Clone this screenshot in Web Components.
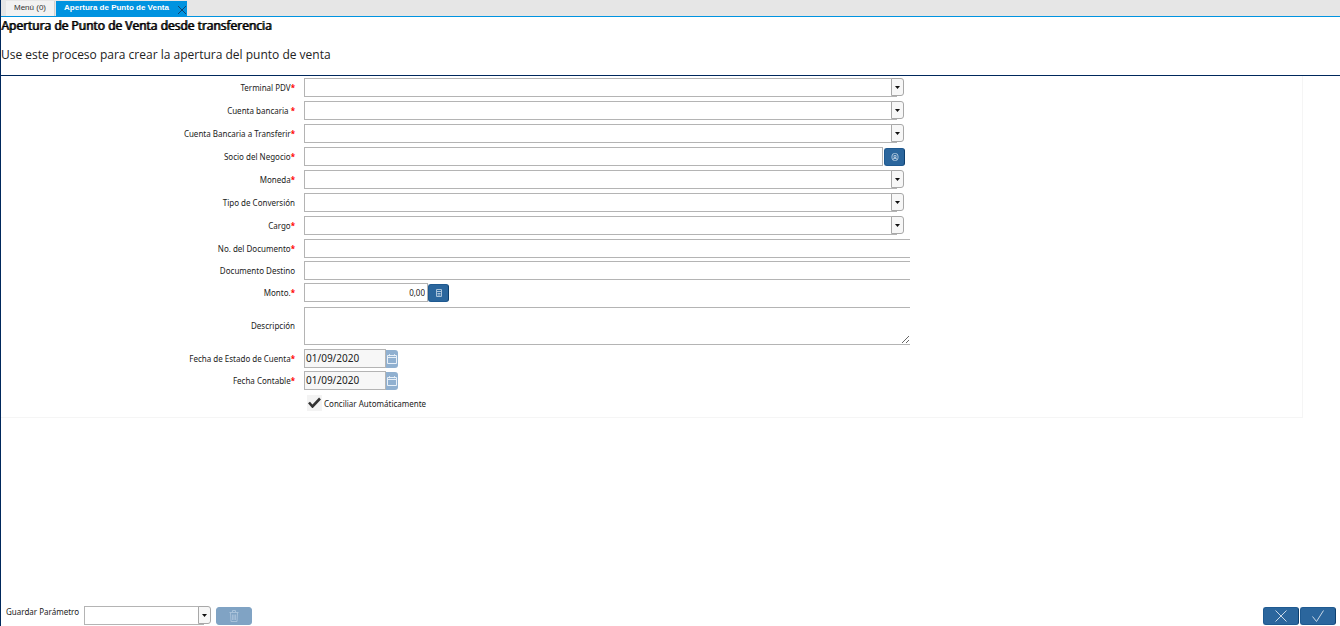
<!DOCTYPE html>
<html lang="es">
<head>
<meta charset="utf-8">
<title>Apertura de Punto de Venta</title>
<style>
  body {
    margin: 0;
    background: #fff;
    color: #222;
    font-family: "Noto Sans", "Open Sans", sans-serif;
    font-size: 8px;
  }
</style>
</head>
<body>
<process-window>
  <tab-bar slot="tabs">
    <tab-item>Menú (0)</tab-item>
    <tab-item active>Apertura de Punto de Venta</tab-item>
  </tab-bar>
  <process-header slot="header" heading="Apertura de Punto de Venta desde transferencia">Use este proceso para crear la apertura del punto de venta</process-header>

  <param-row kind="combo" label="Terminal PDV" required></param-row>
  <param-row kind="combo" label="Cuenta bancaria " required></param-row>
  <param-row kind="combo" label="Cuenta Bancaria a Transferir" required></param-row>
  <param-row kind="search" label="Socio del Negocio" required></param-row>
  <param-row kind="combo" label="Moneda" required></param-row>
  <param-row kind="combo" label="Tipo de Conversión"></param-row>
  <param-row kind="combo" label="Cargo" required></param-row>
  <param-row kind="text" label="No. del Documento" required></param-row>
  <param-row kind="text" label="Documento Destino"></param-row>
  <param-row kind="number" label="Monto." value="0,00" required></param-row>
  <param-row kind="memo" label="Descripción"></param-row>
  <param-row kind="date" label="Fecha de Estado de Cuenta" value="01/09/2020" required></param-row>
  <param-row kind="date" label="Fecha Contable" value="01/09/2020" required></param-row>
  <param-row kind="check" label="Conciliar Automáticamente"></param-row>

  <process-footer slot="footer"></process-footer>
</process-window>

<script>
  const ICONS = {
    partner: `<svg viewBox="0 0 8 8" width="8" height="8"><rect x="1" y=".5" width="6" height="7" rx="2.5"/><path d="M3 2.5h2v2H3zM2.5 6.5v-1h3v1"/></svg>`,
    calculator: `<svg viewBox="0 0 8 8" width="8" height="8"><path d="M1.5.5h5v7h-5zM1.5 2.5h5M2.5 4.5h3M2.5 6h3"/></svg>`,
    calendar: `<svg viewBox="0 0 10 10" width="10" height="10"><path d="M.5 1.5h9v8h-9zM.5 3.5h9M2.5.2v2M7.5.2v2"/></svg>`,
    trash: `<svg viewBox="0 0 12 12" width="12" height="12"><path d="M1.5 2.5h9M4.5 2.5v-2h3v2M2.5 2.5l.5 9h6l.5-9M4.6 4.5v5.5M6 4.5v5.5M7.4 4.5v5.5"/></svg>`,
    cancel: `<svg viewBox="0 0 12 12" width="12" height="12"><path d="M.5.5l11 11M11.5.5l-11 11"/></svg>`,
    ok: `<svg viewBox="0 0 12 12" width="12" height="12"><path d="M.5 6.5l4 5L11.5.5"/></svg>`,
  };

  // Combobox: a select with the small arrow button at its right end.
  // Form-associated, so that a <label for> outside can point at it.
  class ComboBox extends HTMLElement {
    static formAssociated = true;

    constructor() {
      super();
      this.attachShadow({ mode: "open", delegatesFocus: true });
      const label = this.getAttribute("label") || "";
      this.shadowRoot.innerHTML = `
        <style>
          :host { display: block; position: relative; height: 19px; }
          .line { height: 19px; margin-right: 7px; box-sizing: border-box; border: 1px solid #b4b4b4; border-right: 0; }
          select {
            position: absolute;
            inset: 0;
            width: 100%;
            appearance: none;
            border: 0;
            background: none;
            padding: 0 16px 0 2px;
            font: inherit;
          }
          .arrow {
            position: absolute;
            top: 0;
            right: 0;
            width: 13px;
            height: 18px;
            box-sizing: border-box;
            border: 1px solid #a8a8a8;
            border-radius: 0 3px 3px 0;
            background: #f7f7f7;
            display: grid;
            place-items: center;
            pointer-events: none;
          }
        </style>
        <div class="line"></div>
        <select aria-label="${label}"><option value=""></option></select>
        <span class="arrow"><svg width="5" height="3" viewBox="0 0 5 3"><path d="M0 0h5L2.5 3z" fill="#111"/></svg></span>
      `;
    }
  }
  customElements.define("combo-box", ComboBox);

  class IconButton extends HTMLElement {
    constructor() {
      super();
      this.attachShadow({ mode: "open" });
      const disabled = this.hasAttribute("disabled");
      this.shadowRoot.innerHTML = `
        <style>
          :host { display: block; width: 21px; height: 18px; }
          :host([wide]) { width: 36px; }
          button {
            width: 100%;
            height: 100%;
            padding: 0;
            display: grid;
            place-items: center;
            box-sizing: border-box;
            border: 1px solid #1f5a91;
            border-right-color: #0d3f6e;
            border-radius: 3px;
            background: #2b669d;
          }
          button:disabled { background: #80a3c4; border-color: #80a3c4; }
          svg { fill: none; stroke: #c9d8e7; stroke-width: 1; display: block; }
          button:disabled svg, :host(:not([wide])) svg { stroke: #a9c2da; }
        </style>
        <button type="button" aria-label="${this.getAttribute("label")}" ${disabled ? "disabled" : ""}>${ICONS[this.getAttribute("icon")]}</button>
      `;
    }
  }
  customElements.define("icon-button", IconButton);

  class TabItem extends HTMLElement {
    constructor() {
      super();
      this.attachShadow({ mode: "open" });
      const active = this.hasAttribute("active");
      this.shadowRoot.innerHTML = `
        <style>
          :host {
            display: flex;
            align-items: center;
            background: #f2f2f2;
            color: #333;
            border-right: 1px solid #d0d0d0;
            font-family: "Liberation Sans", Arial, sans-serif;
            font-size: 8px;
          }
          :host([active]) { background: #0093e0; color: #fff; border: 0; font-weight: bold; }
          button { border: 0; background: none; color: inherit; font: inherit; padding: 0 8px 2px 8px; }
          .close { padding: 2px 0 0; }
          svg { display: block; stroke: #10436f; fill: none; }
        </style>
        <button type="button" role="tab"><slot></slot></button>
        ${active ? `<button class="close" type="button" aria-label="Cerrar"><svg width="10" height="10" viewBox="0 0 10 10"><path d="M1 1l8 8M9 1L1 9"/></svg></button>` : ""}
      `;
    }
  }
  customElements.define("tab-item", TabItem);

  class TabBar extends HTMLElement {
    constructor() {
      super();
      this.attachShadow({ mode: "open" });
      this.shadowRoot.innerHTML = `
        <style>
          :host {
            display: flex;
            gap: 1px;
            height: 17px;
            box-sizing: border-box;
            padding: 1px 0 0 5px;
            background: #e6e6e6;
            border-bottom: 1px solid #0093e0;
          }
        </style>
        <slot></slot>
      `;
    }
  }
  customElements.define("tab-bar", TabBar);

  class ProcessHeader extends HTMLElement {
    constructor() {
      super();
      this.attachShadow({ mode: "open" });
      this.shadowRoot.innerHTML = `
        <style>
          :host {
            display: block;
            height: 59px;
            box-sizing: border-box;
            border-bottom: 1px solid #00285c;
            color: #222;
            font-family: "Open Sans", "Noto Sans", sans-serif;
            font-size: 12px;
          }
          h1 { margin: 0; font-size: 12px; line-height: 17px; font-weight: normal; color: #000; text-shadow: 1px 0 #000; }
          p { margin: 12px 0 0; line-height: 17px; }
        </style>
        <h1>${this.getAttribute("heading")}</h1>
        <p><slot></slot></p>
      `;
    }
  }
  customElements.define("process-header", ProcessHeader);

  class ParamRow extends HTMLElement {
    constructor() {
      super();
      this.attachShadow({ mode: "open" });
      this.kind = this.getAttribute("kind");
      this.render();
    }

    fieldHTML() {
      const label = this.getAttribute("label");
      const value = this.getAttribute("value") || "";
      switch (this.kind) {
        case "combo":
          return `<combo-box id="f" label="${label}"></combo-box>`;
        case "search":
          return `<input id="f" type="text"><icon-button icon="partner" label="Buscar socio"></icon-button>`;
        case "number":
          return `<input id="f" type="text" value="${value}"><icon-button icon="calculator" label="Calculadora"></icon-button>`;
        case "memo":
          return `<textarea id="f"></textarea>`;
        case "date":
          return `<input id="f" type="text" value="${value}"><button class="cal" type="button" aria-label="Calendario">${ICONS.calendar}</button>`;
        case "check":
          return `<span class="box"><input id="f" type="checkbox" checked><svg width="13" height="11" viewBox="0 0 13 11"><path d="M1 5.5l3.5 4L12 1.5" fill="none" stroke="#333" stroke-width="2.6"/></svg></span><label for="f">${label}</label>`;
        default:
          return `<input id="f" type="text">`;
      }
    }

    render() {
      const star = this.hasAttribute("required") ? `<b>*</b>` : "";
      const label = this.kind === "check" ? "" : `<label for="f">${this.getAttribute("label")}${star}</label>`;
      this.shadowRoot.innerHTML = `
        <style>
          :host { display: grid; grid-template-columns: 303fr 606fr 392fr; padding: 2px 0; }
          :host([kind="text"]), :host([kind="date"]) { padding-bottom: 1px; }
          :host([kind="number"]) { padding-bottom: 3px; }
          :host([kind="check"]) { padding-bottom: 5px; }
          .name { display: flex; align-items: center; justify-content: flex-end; padding: 0 9px 1px 0; white-space: pre; }
          b { color: #f00; }
          .field { display: flex; align-items: center; min-width: 0; }
          input, textarea {
            flex: 1;
            min-width: 0;
            height: 19px;
            box-sizing: border-box;
            border: 1px solid #b4b4b4;
            border-radius: 0;
            margin: 0;
            padding: 0 2px;
            background: #fff;
            color: #222;
            font: inherit;
          }
          combo-box { flex: 1; margin-right: 6px; }
          :host([kind="text"]) input { border-right: 0; }
          :host([kind="search"]) .field { gap: 1px; padding-right: 5px; }
          :host([kind="number"]) input { flex: none; width: 124px; text-align: right; }
          textarea { height: 38px; border-right: 0; display: block; }
          :host([kind="date"]) input { flex: none; width: 82px; background: #f7f7f7; font-size: 10px; padding: 0 1px 1px; }
          .cal {
            width: 12px;
            height: 18px;
            padding: 0;
            border: 0;
            border-radius: 0 3px 3px 0;
            background: #90b0d0;
            display: grid;
            place-items: center;
          }
          .cal svg { fill: none; stroke: #e8f0f8; }
          .box { display: grid; place-items: center; width: 15px; height: 16px; margin: 0 2px 0 3px; background: #f3f3f3; }
          .box input { appearance: none; border: 0; background: none; width: 15px; height: 16px; }
          .box input, .box svg { grid-area: 1 / 1; }
          .box input:not(:checked) + svg { visibility: hidden; }
          .box svg { position: relative; pointer-events: none; }
          .box + label { margin-top: 1px; }
          :host([kind="check"]) .field { height: 19px; }
        </style>
        <div class="name">${label}</div>
        <div class="field">${this.fieldHTML()}</div>
      `;
    }
  }
  customElements.define("param-row", ParamRow);

  class ProcessFooter extends HTMLElement {
    constructor() {
      super();
      this.attachShadow({ mode: "open" });
      this.shadowRoot.innerHTML = `
        <style>
          :host { display: flex; align-items: center; gap: 1px; padding: 0 4px 1px 5px; }
          label { margin: 0 4px 8px 0; }
          combo-box { width: 127px; }
          .delete { margin-left: 4px; }
          .spacer { flex: 1; }
        </style>
        <label for="saved">Guardar Parámetro</label>
        <combo-box id="saved" label="Guardar Parámetro"></combo-box>
        <icon-button class="delete" wide disabled icon="trash" label="Eliminar"></icon-button>
        <span class="spacer"></span>
        <icon-button wide icon="cancel" label="Cancelar"></icon-button>
        <icon-button wide icon="ok" label="Aceptar"></icon-button>
      `;
    }
  }
  customElements.define("process-footer", ProcessFooter);

  class ProcessWindow extends HTMLElement {
    constructor() {
      super();
      this.attachShadow({ mode: "open" });
      this.shadowRoot.innerHTML = `
        <style>
          :host { display: flex; flex-direction: column; min-height: 100vh; box-sizing: border-box; border-left: 1px solid #00285c; }
          form { margin-right: 37px; border: 1px solid #f5f5f5; border-width: 0 1px 1px 0; }
          .rest { flex: 1; }
        </style>
        <slot name="tabs"></slot>
        <slot name="header"></slot>
        <form><slot></slot></form>
        <div class="rest"></div>
        <slot name="footer"></slot>
      `;
    }
  }
  customElements.define("process-window", ProcessWindow);
</script>
</body>
</html>
